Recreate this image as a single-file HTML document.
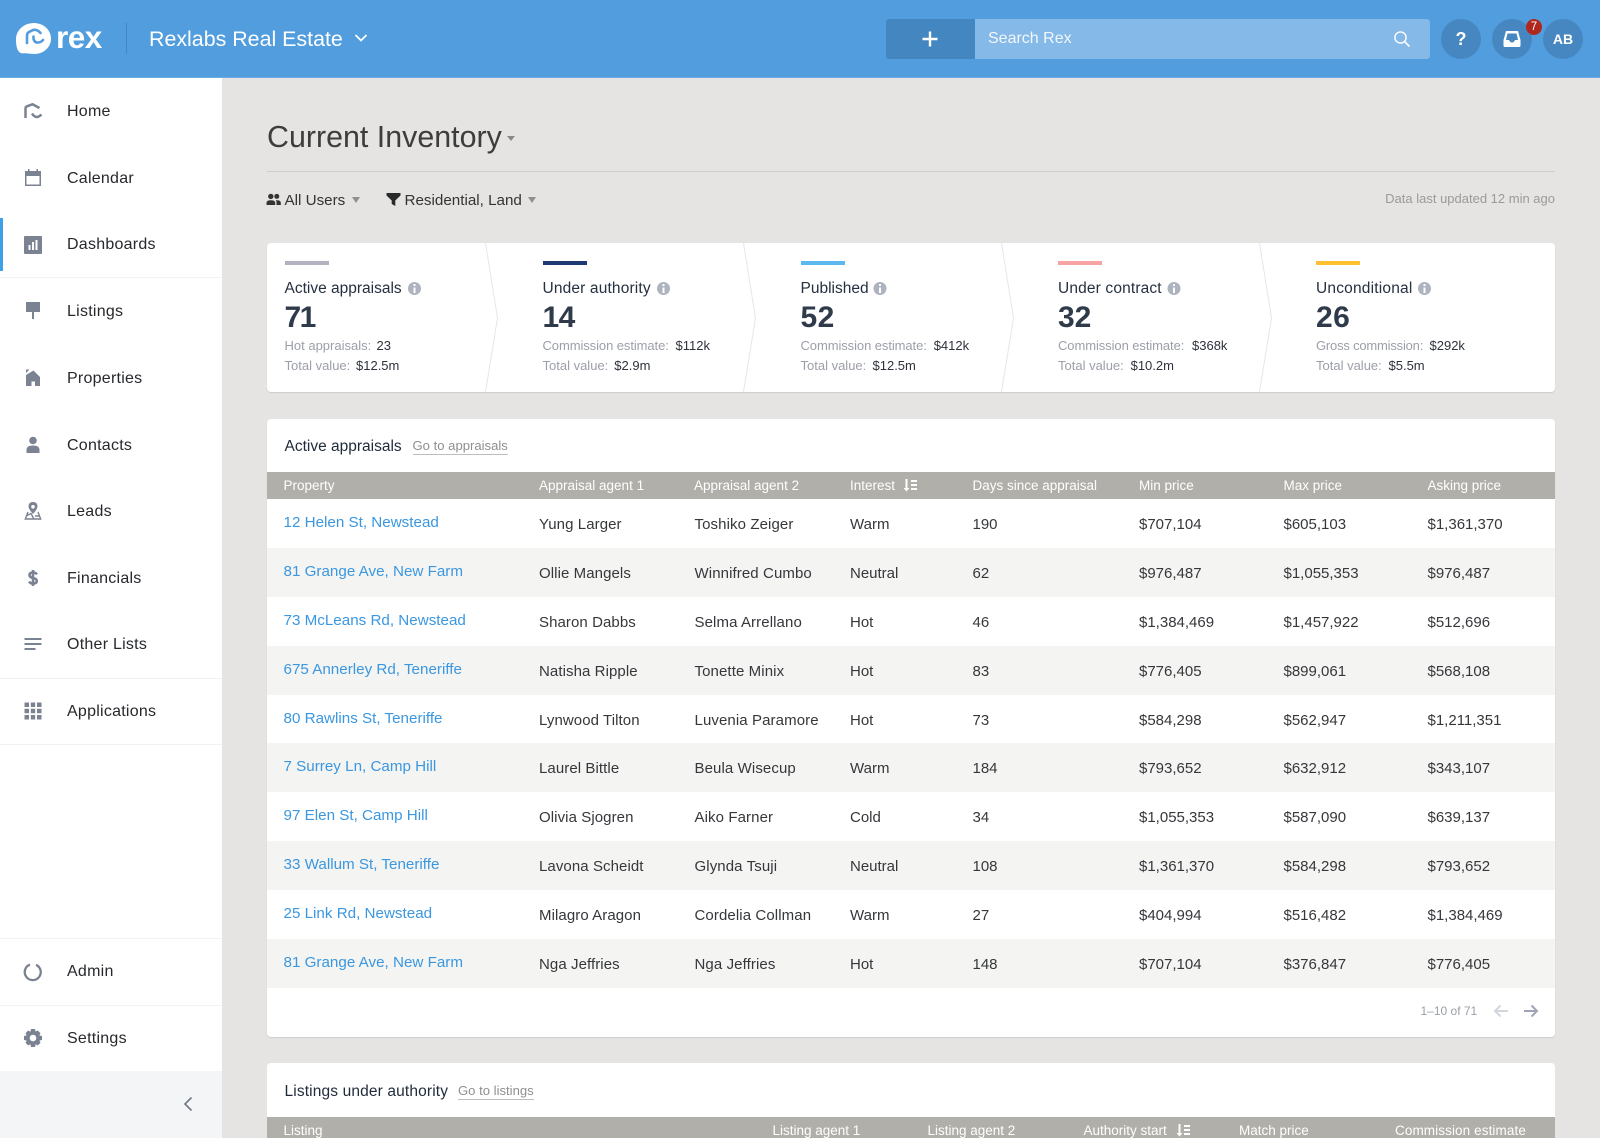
<!DOCTYPE html>
<html><head><meta charset="utf-8"><title>Current Inventory</title>
<style>
*{box-sizing:border-box;margin:0;padding:0}
html,body{width:1600px;height:1138px;overflow:hidden;background:#e5e4e2;font-family:"Liberation Sans",sans-serif}
#root{position:relative;width:1600px;height:1138px;overflow:hidden;background:#e5e4e2}
.a{position:absolute;white-space:nowrap}
#hd{position:absolute;left:0;top:0;width:1600px;height:78px;background:#519ddd;border-bottom:1px solid #69ace3}
#sb{position:absolute;left:0;top:78px;width:222px;height:1060px;background:#fff}
.n{position:absolute;left:67px;font-size:16px;line-height:20px;color:#26282c;letter-spacing:.25px}
.ln{position:absolute;left:0;width:222px;height:1px;background:#f1f2f3}
.ic{position:absolute;left:23px;width:20px;height:20px;fill:#7b8291;stroke:none}
.card{position:absolute;left:267px;width:1288px;background:#fff;border-radius:4px;box-shadow:0 1px 1px rgba(0,0,0,.1)}
.lab{font-size:15.5px;line-height:18px;color:#253040}
.num{font-size:30px;line-height:32px;font-weight:bold;color:#2f3b4a}
.sub{font-size:13px;line-height:16px;color:#9c9fa9}
.val{font-size:13px;line-height:16px;color:#2d323b}
.bar{position:absolute;top:261px;width:44px;height:4px}
.th{position:absolute;left:267px;width:1288px;height:27px;background:#b0afa9;color:#fff;font-size:13.5px;line-height:27px}
.th span{position:absolute;top:0;white-space:nowrap}
.r{position:relative;width:1288px;height:48.9px;font-size:15px;color:#35373a}
.r:nth-child(even){background:#f4f4f3}
.r span{position:absolute;top:17px;line-height:18px;white-space:nowrap}
.r b{position:absolute;left:16.5px;top:15px;line-height:18px;white-space:nowrap;font-weight:normal;color:#3a97e0;font-size:15.2px}
.r span:nth-of-type(1){left:272px;letter-spacing:.08px}.r span:nth-of-type(2){left:427.5px;letter-spacing:.1px}.r span:nth-of-type(3){left:583px}
.r span:nth-of-type(4){left:705.5px}.r span:nth-of-type(5){left:872px}.r span:nth-of-type(6){left:1016.5px}.r span:nth-of-type(7){left:1160.5px}
.go{font-size:13.1px;line-height:16px;color:#8f8f8f;border-bottom:1px solid #bdbdbb}
.tt{font-size:15.5px;line-height:18px;color:#1f2a3a}
</style></head><body><div id="root">

<div id="hd"></div>
<svg class="a" style="left:14px;top:21px" width="40" height="36" viewBox="14 21 40 36"><path fill="#fff" d="M34 23C43.500 23 51 30 51 38.500C51 47.500 43.500 54 34 54C30 54 27 53 24 53.300C19 54 16 50 16 39.500C16 30 24 23 34 23Z"/><path fill="none" stroke="#519ddd" stroke-width="2.600" stroke-linecap="round" d="M27 43V35.500Q27 33 29 32L33.500 29.800Q38 29.500 40.500 33M33.500 36.500V39Q35 43 38 42.500Q41 42.500 43 40"/></svg>
<div class="a" style="left:56px;top:17px;font-size:31.500px;line-height:40px;font-weight:bold;color:#fff;letter-spacing:-.5px">rex</div>
<div class="a" style="left:126px;top:23px;width:1px;height:31px;background:#4486bf"></div>
<div class="a" style="left:149px;top:26px;font-size:21.4px;line-height:26px;color:#fff">Rexlabs Real Estate</div>
<svg class="a" style="left:354px;top:33px" width="14" height="10" viewBox="0 0 14 10"><path d="M1.500 2L7 7.500L12.500 2" fill="none" stroke="#fff" stroke-width="1.800"/></svg>

<div class="a" style="left:885.500px;top:19px;width:90px;height:40px;background:#4486bf;border-radius:3px 0 0 3px"></div>
<svg class="a" style="left:922px;top:31px" width="16" height="16" viewBox="0 0 16 16"><path d="M8 .5V15.500M.5 8H15.500" stroke="#fff" stroke-width="2.400"/></svg>
<div class="a" style="left:975px;top:19px;width:455px;height:40px;background:#84b9e8;border-radius:0 3px 3px 0"></div>
<div class="a" style="left:988px;top:29px;font-size:16px;line-height:20px;color:#f2f7fc">Search Rex</div>
<svg class="a" style="left:1393px;top:30px" width="18" height="18" viewBox="0 0 18 18"><circle cx="7.500" cy="7.500" r="5.600" fill="none" stroke="#fff" stroke-width="1.400"/><path d="M11.600 11.600L16.500 16.500" stroke="#fff" stroke-width="1.600"/></svg>
<div class="a" style="left:1441px;top:19px;width:40px;height:40px;border-radius:50%;background:#4787c1"></div>
<div class="a" style="left:1441px;top:28px;width:40px;text-align:center;font-size:18px;line-height:22px;font-weight:bold;color:#fff">?</div>
<div class="a" style="left:1492px;top:19px;width:40px;height:40px;border-radius:50%;background:#4787c1"></div>
<svg class="a" style="left:1502px;top:30px" width="20" height="18" viewBox="0 0 20 18"><path fill="#fff" fill-rule="evenodd" d="M4 1H16L18.500 10V15.500Q18.500 17 17 17H3Q1.500 17 1.500 15.500V10ZM5.500 3.500L4 10H7Q8 12.500 10 12.500Q12 12.500 13 10H16L14.500 3.500Z"/></svg>
<div class="a" style="left:1526px;top:19px;width:16px;height:16px;border-radius:50%;background:#b0271e;color:#fff;font-size:11.500px;line-height:16px;text-align:center">7</div>
<div class="a" style="left:1543px;top:19px;width:40px;height:40px;border-radius:50%;background:#4787c1;color:#fff;font-size:14px;line-height:40px;text-align:center;font-weight:bold">AB</div>

<div id="sb"></div>
<div class="a" style="left:0;top:218px;width:3px;height:53px;background:#3fa0e8"></div>
<div class="ln" style="top:277px"></div><div class="ln" style="top:678px"></div><div class="ln" style="top:744px"></div><div class="ln" style="top:938px"></div><div class="ln" style="top:1005px"></div>
<div class="a" style="left:0;top:1071px;width:222px;height:67px;background:#f4f5f7"></div>

<div class="n" style="top:102px">Home</div>
<div class="n" style="top:168.500px">Calendar</div>
<div class="n" style="top:235px">Dashboards</div>
<div class="n" style="top:301.500px">Listings</div>
<div class="n" style="top:368.500px">Properties</div>
<div class="n" style="top:435.500px">Contacts</div>
<div class="n" style="top:502px">Leads</div>
<div class="n" style="top:568.500px">Financials</div>
<div class="n" style="top:635px">Other Lists</div>
<div class="n" style="top:701.500px">Applications</div>
<div class="n" style="top:961.500px">Admin</div>
<div class="n" style="top:1028.500px">Settings</div>

<svg class="ic" style="top:101px" viewBox="0 0 20 20"><path fill="none" stroke="#7b8291" stroke-width="2.500" d="M2.500 17V7.500Q2.500 6 4 5.300L9.500 3.300L16.500 7M9 12.500Q11.500 16.500 14.500 16Q16.500 15.500 18.500 13.500"/></svg>
<svg class="ic" style="top:168px" viewBox="0 0 20 20"><path fill-rule="evenodd" d="M2 3H5V1H6.500V3H13.500V1H15V3H18V18H2ZM3.500 8V16.500H16.500V8Z"/></svg>
<svg class="ic" style="top:235px" viewBox="0 0 20 20"><path fill-rule="evenodd" d="M2 1H18Q19 1 19 2V18Q19 19 18 19H2Q1 19 1 18V2Q1 1 2 1ZM5.500 10V15H7.500V10ZM9 7V15H11V7ZM12.500 5V15H14.500V5Z"/></svg>
<svg class="ic" style="top:301px" viewBox="0 0 20 20"><path d="M3 1H17V11H11V18H9V11H3Z"/></svg>
<svg class="ic" style="top:368px" viewBox="0 0 20 20"><path d="M10.500 2.500L17 9V18H12V13.500H8.500V18H3V7Z"/><path d="M3 1.500H6.500L3 5Z"/></svg>
<svg class="ic" style="top:435px" viewBox="0 0 20 20"><circle cx="10" cy="5.500" r="3.800"/><path d="M3.500 18V15Q3.500 10.500 10 10.500Q16.500 10.500 16.500 15V18Z"/></svg>
<svg class="ic" style="top:501px" viewBox="0 0 20 20"><path fill-rule="evenodd" d="M10 1Q14.500 1 14.500 5.500Q14.500 8 10 13Q5.500 8 5.500 5.500Q5.500 1 10 1ZM10 4A1.800 1.800 0 1 0 10 7.600A1.800 1.800 0 1 0 10 4Z"/><path fill="none" stroke="#7b8291" stroke-width="1.400" d="M5 11L2.300 18H17.700L15 11M3 15L8 12.500L11 18M12 15L17 15"/></svg>
<svg class="ic" style="top:568px" viewBox="0 0 20 20"><path fill="none" stroke="#7b8291" stroke-width="2.600" d="M13.800 6.500Q13 4.500 10 4.500Q6.500 4.500 6.500 7Q6.500 9.300 10 10Q13.800 10.700 13.800 13Q13.800 15.500 10 15.500Q7 15.500 6.200 13.500M10 2V18"/></svg>
<svg class="ic" style="top:634px" viewBox="0 0 20 20"><path d="M1.500 4H18.500V6H1.500ZM1.500 9H18.500V11H1.500ZM1.500 14H12.500V16H1.500Z"/></svg>
<svg class="ic" style="top:701px" viewBox="0 0 20 20"><path d="M1.500 1.500H6V6H1.500ZM7.800 1.500H12.200V6H7.800ZM14 1.500H18.500V6H14ZM1.500 7.800H6V12.200H1.500ZM7.800 7.800H12.200V12.200H7.800ZM14 7.800H18.500V12.200H14ZM1.500 14H6V18.500H1.500ZM7.800 14H12.200V18.500H7.800ZM14 14H18.500V18.500H14Z"/></svg>
<svg class="ic" style="top:962px" viewBox="0 0 20 20"><path fill="none" stroke="#7b8291" stroke-width="2.300" d="M13 2.800A8 8 0 1 1 7 2.600M15.500 4.800L16.800 6.300"/></svg>
<svg class="ic" style="top:1028px" viewBox="0 0 20 20"><path fill-rule="evenodd" d="M8 1H12L12.500 3.500L14.800 2.500L17.500 5.200L16.300 7.400L19 8V12L16.400 12.600L17.500 14.800L14.800 17.500L12.600 16.300L12 19H8L7.400 16.300L5.200 17.500L2.500 14.800L3.700 12.600L1 12V8L3.700 7.400L2.500 5.200L5.200 2.500L7.400 3.700ZM10 6.700A3.300 3.300 0 1 0 10 13.300A3.300 3.300 0 1 0 10 6.700Z"/></svg>
<svg class="a" style="left:182px;top:1096px" width="12" height="16" viewBox="0 0 12 16"><path d="M9.500 1.500L3 8L9.500 14.500" fill="none" stroke="#6f7787" stroke-width="1.600"/></svg>

<div class="a" style="left:267px;top:119px;font-size:30.400px;line-height:36px;color:#3d3d3d">Current Inventory</div>
<div class="a" style="left:507px;top:136px;border:4px solid transparent;border-top:5px solid #8a8a85;border-bottom:0"></div>
<div class="a" style="left:267px;top:171px;width:1288px;height:1px;background:#cfcecb"></div>

<svg class="a" style="left:266px;top:193px" width="15" height="13" viewBox="0 0 15 13"><circle cx="4.800" cy="3.400" r="2.700" fill="#333"/><circle cx="10.800" cy="3.400" r="2.500" fill="#333"/><path fill="#333" d="M.5 12V9.800Q.5 7.200 4.800 7.200Q9.200 7.200 9.200 9.800V12ZM10.500 12V9.500Q10.500 8 9.700 7.200H11Q14.800 7.200 14.800 9.800V12Z"/></svg>
<div class="a" style="left:284.500px;top:192px;font-size:15.200px;line-height:18px;color:#333">All Users</div>
<div class="a" style="left:352px;top:197px;border:4px solid transparent;border-top:6px solid #8f8f8b;border-bottom:0"></div>
<svg class="a" style="left:386px;top:192px" width="15" height="15" viewBox="0 0 15 15"><path fill="#2a2a2a" d="M.5 1H14.500V3.500L9.300 8.500V14L5.700 12V8.500L.5 3.500Z"/></svg>
<div class="a" style="left:404.500px;top:192px;font-size:15.200px;line-height:18px;color:#333">Residential, Land</div>
<div class="a" style="left:528px;top:197px;border:4px solid transparent;border-top:6px solid #8f8f8b;border-bottom:0"></div>
<div class="a" style="right:45px;top:191px;font-size:13px;line-height:16px;color:#9a9a96">Data last updated 12 min ago</div>

<!-- stats -->
<div class="card" style="top:243px;height:149px"></div>
<svg class="a" style="left:480px;top:243px" width="1040" height="149" viewBox="0 0 1040 149" fill="none" stroke="#e4e6ee" stroke-width="1"><path d="M5.500 0L17.500 75L5.500 149M263.500 0L275.500 75L263.500 149M521.500 0L533.500 75L521.500 149M779.500 0L791.500 75L779.500 149"/></svg>
<div class="bar" style="left:284.500px;background:#b3b2c1"></div>
<div class="bar" style="left:542.500px;background:#1d3a72"></div>
<div class="bar" style="left:800.500px;background:#5cb8ee"></div>
<div class="bar" style="left:1058px;background:#f7a3a3"></div>
<div class="bar" style="left:1316px;background:#fdc12f"></div>

<div class="a lab" style="left:284.500px;top:280px">Active appraisals</div>
<div class="a lab" style="left:542.500px;top:280px;letter-spacing:.15px">Under authority</div>
<div class="a lab" style="left:800.500px;top:280px">Published</div>
<div class="a lab" style="left:1058px;top:280px;letter-spacing:.15px">Under contract</div>
<div class="a lab" style="left:1316px;top:280px;letter-spacing:.2px">Unconditional</div>

<svg class="a" style="left:0;top:0" width="1600" height="300" viewBox="0 0 1600 300"><g fill="#aeb3c0"><circle cx="414.500" cy="288.500" r="6.500"/><circle cx="663.500" cy="288.500" r="6.500"/><circle cx="880" cy="288.500" r="6.500"/><circle cx="1174" cy="288.500" r="6.500"/><circle cx="1424.500" cy="288.500" r="6.500"/></g><g stroke="#fff" stroke-width="2"><path d="M414.500 287.500V293M663.500 287.500V293M880 287.500V293M1174 287.500V293M1424.500 287.500V293"/><path d="M414.500 284V286M663.500 284V286M880 284V286M1174 284V286M1424.500 284V286"/></g></svg>

<div class="a num" style="left:284.500px;top:301.500px;letter-spacing:-1.500px">71</div>
<div class="a num" style="left:542.500px;top:301.500px;letter-spacing:-.5px">14</div>
<div class="a num" style="left:800.500px;top:301.500px;letter-spacing:.5px">52</div>
<div class="a num" style="left:1058px;top:301.500px">32</div>
<div class="a num" style="left:1316px;top:301.500px;letter-spacing:.5px">26</div>

<div class="a sub" style="left:284.500px;top:338px">Hot appraisals:</div><div class="a val" style="left:376.500px;top:338px">23</div>
<div class="a sub" style="left:284.500px;top:358px">Total value:</div><div class="a val" style="left:356px;top:358px">$12.5m</div>
<div class="a sub" style="left:542.500px;top:338px;letter-spacing:-.08px">Commission estimate:</div><div class="a val" style="left:675.500px;top:338px">$112k</div>
<div class="a sub" style="left:542.500px;top:358px">Total value:</div><div class="a val" style="left:614.300px;top:358px">$2.9m</div>
<div class="a sub" style="left:800.500px;top:338px;letter-spacing:-.08px">Commission estimate:</div><div class="a val" style="left:933.700px;top:338px">$412k</div>
<div class="a sub" style="left:800.500px;top:358px">Total value:</div><div class="a val" style="left:872.500px;top:358px">$12.5m</div>
<div class="a sub" style="left:1058px;top:338px;letter-spacing:-.08px">Commission estimate:</div><div class="a val" style="left:1192px;top:338px">$368k</div>
<div class="a sub" style="left:1058px;top:358px">Total value:</div><div class="a val" style="left:1130.600px;top:358px">$10.2m</div>
<div class="a sub" style="left:1316px;top:338px;letter-spacing:-.2px">Gross commission:</div><div class="a val" style="left:1429.500px;top:338px">$292k</div>
<div class="a sub" style="left:1316px;top:358px">Total value:</div><div class="a val" style="left:1388.500px;top:358px">$5.5m</div>

<!-- table 1 -->
<div class="card" style="top:419px;height:618px"></div>
<div class="a tt" style="left:284.500px;top:438px">Active appraisals</div>
<div class="a go" style="left:412.500px;top:438px">Go to appraisals</div>
<div class="th" style="top:472px"><span style="left:16.500px">Property</span><span style="left:272px">Appraisal agent 1</span><span style="left:427px">Appraisal agent 2</span><span style="left:583px">Interest</span><span style="left:705.500px">Days since appraisal</span><span style="left:872px">Min price</span><span style="left:1016.500px">Max price</span><span style="left:1160.500px">Asking price</span>
<svg style="position:absolute;left:636px;top:7px" width="14" height="13" viewBox="0 0 14 13"><path fill="#fff" d="M2.500 0H4.500V9H6.500L3.500 12.500L.5 9H2.500ZM8 1H14V3H8ZM8 5H14V7H8ZM8 9H14V11H8Z"/></svg></div>
<div class="a" style="left:267px;top:499px;width:1288px">
<div class="r"><b>12 Helen St, Newstead</b><span>Yung Larger</span><span>Toshiko Zeiger</span><span>Warm</span><span>190</span><span>$707,104</span><span>$605,103</span><span>$1,361,370</span></div>
<div class="r"><b>81 Grange Ave, New Farm</b><span>Ollie Mangels</span><span>Winnifred Cumbo</span><span>Neutral</span><span>62</span><span>$976,487</span><span>$1,055,353</span><span>$976,487</span></div>
<div class="r"><b>73 McLeans Rd, Newstead</b><span>Sharon Dabbs</span><span>Selma Arrellano</span><span>Hot</span><span>46</span><span>$1,384,469</span><span>$1,457,922</span><span>$512,696</span></div>
<div class="r"><b>675 Annerley Rd, Teneriffe</b><span>Natisha Ripple</span><span>Tonette Minix</span><span>Hot</span><span>83</span><span>$776,405</span><span>$899,061</span><span>$568,108</span></div>
<div class="r"><b>80 Rawlins St, Teneriffe</b><span>Lynwood Tilton</span><span>Luvenia Paramore</span><span>Hot</span><span>73</span><span>$584,298</span><span>$562,947</span><span>$1,211,351</span></div>
<div class="r"><b>7 Surrey Ln, Camp Hill</b><span>Laurel Bittle</span><span>Beula Wisecup</span><span>Warm</span><span>184</span><span>$793,652</span><span>$632,912</span><span>$343,107</span></div>
<div class="r"><b>97 Elen St, Camp Hill</b><span>Olivia Sjogren</span><span>Aiko Farner</span><span>Cold</span><span>34</span><span>$1,055,353</span><span>$587,090</span><span>$639,137</span></div>
<div class="r"><b>33 Wallum St, Teneriffe</b><span>Lavona Scheidt</span><span>Glynda Tsuji</span><span>Neutral</span><span>108</span><span>$1,361,370</span><span>$584,298</span><span>$793,652</span></div>
<div class="r"><b>25 Link Rd, Newstead</b><span>Milagro Aragon</span><span>Cordelia Collman</span><span>Warm</span><span>27</span><span>$404,994</span><span>$516,482</span><span>$1,384,469</span></div>
<div class="r"><b>81 Grange Ave, New Farm</b><span>Nga Jeffries</span><span>Nga Jeffries</span><span>Hot</span><span>148</span><span>$707,104</span><span>$376,847</span><span>$776,405</span></div>
</div>
<div class="a" style="left:1420.500px;top:1003px;font-size:12px;line-height:16px;color:#9b9fa9">1–10 of 71</div>
<svg class="a" style="left:1493px;top:1004px" width="16" height="14" viewBox="0 0 16 14"><path d="M15 7H2M7.500 1.500L2 7L7.500 12.500" fill="none" stroke="#d3d6de" stroke-width="2"/></svg>
<svg class="a" style="left:1523px;top:1004px" width="16" height="14" viewBox="0 0 16 14"><path d="M1 7H14M8.500 1.500L14 7L8.500 12.500" fill="none" stroke="#9ea4b3" stroke-width="2"/></svg>

<!-- table 2 -->
<div class="card" style="top:1063px;height:75px;border-radius:4px 4px 0 0;box-shadow:none"></div>
<div class="a tt" style="left:284.500px;top:1082.500px;letter-spacing:.14px">Listings under authority</div>
<div class="a go" style="left:458px;top:1082.500px">Go to listings</div>
<div class="th" style="top:1117px;height:21px;overflow:hidden"><span style="left:16.500px">Listing</span><span style="left:505.500px">Listing agent 1</span><span style="left:660.500px">Listing agent 2</span><span style="left:816.500px">Authority start</span><span style="left:972px">Match price</span><span style="left:1128px;letter-spacing:.1px">Commission estimate</span>
<svg style="position:absolute;left:909px;top:7px" width="14" height="13" viewBox="0 0 14 13"><path fill="#fff" d="M2.500 0H4.500V9H6.500L3.500 12.500L.5 9H2.500ZM8 1H14V3H8ZM8 5H14V7H8ZM8 9H14V11H8Z"/></svg></div>
</div></body></html>
